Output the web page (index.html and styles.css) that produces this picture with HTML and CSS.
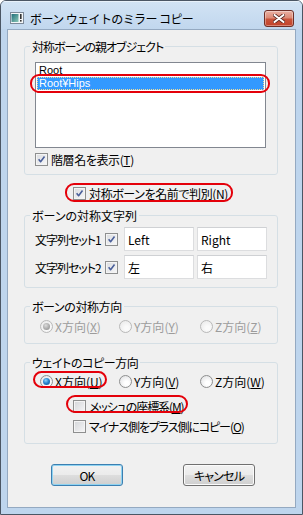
FILE: index.html
```html
<!DOCTYPE html>
<html lang="ja">
<head>
  <meta charset="UTF-8" />
  <meta name="viewport" content="width=device-width, initial-scale=1.0"/>
  <title>ボーン ウェイトのミラー コピー</title>
  <link rel="stylesheet" href="styles.css">
</head>
<body>
  <svg class="defs" width="0" height="0">
    <symbol id="chk" viewBox="0 0 11 11">
      <path d="M2 5.2 L4.4 8.2 L9.2 1.8" fill="none" stroke="#4a5f9a" stroke-width="1.9" stroke-linejoin="round"/>
    </symbol>
  </svg>

  <div class="window">
    <div class="titlebar">
      <svg class="app-icon" viewBox="0 0 14 12">
        <defs>
          <linearGradient id="pane" x1="0" y1="0" x2="1" y2="1">
            <stop offset="0" stop-color="#1f6d7a"/>
            <stop offset="1" stop-color="#8cc9b8"/>
          </linearGradient>
        </defs>
        <rect x="0.5" y="0.5" width="13" height="11" fill="#f3f6f8" stroke="#7c8999"/>
        <rect x="1.5" y="2" width="7" height="8" fill="url(#pane)"/>
        <rect x="10" y="2" width="1.6" height="5" fill="#333"/>
        <rect x="10" y="8" width="1.6" height="1.6" fill="#333"/>
      </svg>
      <span class="title">ボーン ウェイトのミラー コピー</span>
      <button class="close" title="閉じる">
        <svg viewBox="0 0 12 9" width="12" height="9">
          <path d="M1.5 1 L10.5 8 M10.5 1 L1.5 8" stroke="#5b2a24" stroke-width="3.6" stroke-linecap="round"/>
          <path d="M1.5 1 L10.5 8 M10.5 1 L1.5 8" stroke="#ffffff" stroke-width="2" stroke-linecap="round"/>
        </svg>
      </button>
    </div>

    <div class="frame">
      <div class="content">

        <fieldset class="group g-parent">
          <legend>対称ボーンの親オブジェクト</legend>
          <div class="group-body">
            <div class="listbox">
              <div class="item">Root</div>
              <div class="item selected">Root¥Hips<span class="mark"></span></div>
            </div>
            <label class="check"><span class="cb"><svg><use href="#chk"/></svg></span>階層名を表示<span class="key">(<u>T</u>)</span></label>
          </div>
        </fieldset>

        <div class="center-row">
          <label class="check marked"><span class="cb"><svg><use href="#chk"/></svg></span>対称ボーンを名前で判別<span class="key">(<u>N</u>)</span><span class="mark mark-name"></span></label>
        </div>

        <fieldset class="group g-strings">
          <legend>ボーンの対称文字列</legend>
          <div class="group-body">
            <div class="set-row">
              <span class="set-label">文字列セット1</span>
              <span class="cb"><svg><use href="#chk"/></svg></span>
              <input class="textbox" type="text" value="Left">
              <input class="textbox" type="text" value="Right">
            </div>
            <div class="set-row">
              <span class="set-label">文字列セット2</span>
              <span class="cb"><svg><use href="#chk"/></svg></span>
              <input class="textbox" type="text" value="左">
              <input class="textbox" type="text" value="右">
            </div>
          </div>
        </fieldset>

        <fieldset class="group g-axis">
          <legend>ボーンの対称方向</legend>
          <div class="group-body">
            <div class="radios disabled">
              <label class="radio"><span class="rb on"></span>X方向<span class="key">(<u>X</u>)</span></label>
              <label class="radio"><span class="rb"></span>Y方向<span class="key">(<u>Y</u>)</span></label>
              <label class="radio"><span class="rb"></span>Z方向<span class="key">(<u>Z</u>)</span></label>
            </div>
          </div>
        </fieldset>

        <fieldset class="group g-copy">
          <legend>ウェイトのコピー方向</legend>
          <div class="group-body">
            <div class="radios">
              <label class="radio marked"><span class="rb on"></span>X方向<span class="key">(<u>U</u>)</span><span class="mark mark-x"></span></label>
              <label class="radio"><span class="rb"></span>Y方向<span class="key">(<u>V</u>)</span></label>
              <label class="radio"><span class="rb"></span>Z方向<span class="key">(<u>W</u>)</span></label>
            </div>
            <label class="check sub marked"><span class="cb off"></span>メッシュの座標系<span class="key">(<u>M</u>)</span><span class="mark mark-mesh"></span></label>
            <label class="check sub"><span class="cb off"></span>マイナス側をプラス側にコピー<span class="key">(<u>O</u>)</span></label>
          </div>
        </fieldset>

        <div class="buttons">
          <button class="btn default">OK</button>
          <button class="btn">キャンセル</button>
        </div>

      </div>
    </div>
  </div>
</body>
</html>
```

FILE: styles.css
```css
* {
  box-sizing: border-box;
}

body {
  margin: 0;
  background-color: #ffffff;
  font-family: "Noto Sans CJK JP", "Noto Sans", sans-serif;
  font-size: 12px;
  color: #000;
  font-feature-settings: "palt";
}

.defs {
  position: absolute;
  width: 0;
  height: 0;
}

/* window frame */
.window {
  width: 303px;
  height: 515px;
  display: flex;
  flex-direction: column;
  border: 1px solid #4b5664;
  border-radius: 6px 6px 0 0;
  background-color: #bed5ed;
  overflow: hidden;
}

.titlebar {
  flex: none;
  height: 28px;
  display: flex;
  align-items: flex-start;
  padding: 0 8px 0 9px;
  background: linear-gradient(#d2e3f4, #c1d7ee);
  box-shadow: inset 0 1px 0 #e8f1fa;
}

.app-icon {
  width: 14px;
  height: 12px;
  margin-top: 11px;
}

.title {
  flex: 1;
  margin: 10px 0 0 6px;
  line-height: 15px;
  letter-spacing: -0.6px;
  white-space: nowrap;
  font-feature-settings: normal;
}

.close {
  width: 30px;
  height: 17px;
  margin-top: 9px;
  padding: 0;
  display: flex;
  align-items: center;
  justify-content: center;
  border: 1px solid #6e2f27;
  border-radius: 3px;
  background: linear-gradient(#eab1a4 0%, #dc8a76 45%, #c9543b 55%, #c2432b 100%);
  box-shadow: inset 0 0 0 1px rgba(255,255,255,0.35);
}

.frame {
  flex: 1;
  display: flex;
  padding: 0 6px 6px;
}

.content {
  flex: 1;
  display: flex;
  flex-direction: column;
  border: 1px solid #94a9c1;
  background-color: #f0f0f0;
  letter-spacing: -0.4px;
}

/* group boxes */
.group {
  margin: 11px 17px 0 16px;
  padding: 0;
  min-width: 0;
  border: 1px solid #d5dfe5;
  border-radius: 3px;
}

.group legend {
  margin-left: 5px;
  padding: 0 2px;
  line-height: 15px;
}

.g-parent {
  margin-top: 9px;
}

.g-parent legend {
  letter-spacing: -1px;
}

.g-parent .group-body {
  padding: 8px 11px 7px 10px;
}

.g-strings {
  margin-top: 7px;
}

.g-strings legend {
  letter-spacing: 0;
}

.g-strings .group-body {
  display: flex;
  flex-direction: column;
  gap: 4px;
  padding: 4px 0 8px 10px;
}

.g-axis .group-body {
  padding: 5px 0 9px 15px;
}

.g-copy .group-body {
  padding: 4px 0 9px 15px;
}

/* list box */
.listbox {
  height: 86px;
  padding: 1px 1px 0;
  border: 1px solid #828790;
  background-color: #fff;
  font-family: "Liberation Sans", sans-serif;
  font-size: 11px;
  letter-spacing: 0;
}

.item {
  position: relative;
  height: 13px;
  line-height: 13px;
  padding-left: 2px;
  white-space: nowrap;
}

.item.selected {
  background-color: #3399ff;
  color: #fff;
  outline: 1px dotted #f3dc95;
  outline-offset: -1px;
}

/* check boxes */
.check {
  display: flex;
  align-items: center;
  width: fit-content;
  height: 15px;
  line-height: 15px;
  white-space: nowrap;
}

.g-parent .check {
  margin-top: 4px;
}

.cb {
  flex: none;
  width: 13px;
  height: 13px;
  margin-right: 3px;
  padding: 1px;
  border: 1px solid #8e8f8f;
  background: linear-gradient(135deg, #dadcdf, #f8f8f9);
  box-shadow: inset 0 0 0 1px #f4f4f4;
}

.cb svg {
  display: block;
  width: 9px;
  height: 9px;
}

.cb.off {
  background: linear-gradient(135deg, #d4d6d9, #f6f6f7);
}

.key u {
  text-decoration-thickness: 1px;
  text-underline-offset: 1px;
}

.center-row {
  display: flex;
  justify-content: center;
  margin-top: 11px;
  padding-right: 2px;
}

.check.sub {
  margin-left: 33px;
  margin-top: 10px;
  letter-spacing: -1.1px;
}

.check.sub + .check.sub {
  margin-top: 5px;
}

/* string sets */
.set-row {
  display: flex;
  align-items: center;
  height: 24px;
}

.set-label {
  width: 70px;
  letter-spacing: -1px;
  white-space: nowrap;
}

.set-row .cb {
  margin-right: 6px;
}

.textbox {
  width: 70px;
  height: 24px;
  margin: 0;
  padding: 0 3px;
  border: 1px solid #dcdddf;
  border-top-color: #cfd1d4;
  background-color: #fff;
  font: inherit;
  font-feature-settings: "palt";
  letter-spacing: 0;
  color: #000;
  outline: none;
}

.textbox + .textbox {
  margin-left: 3px;
}

/* radio buttons */
.radios {
  display: grid;
  grid-template-columns: 79px 81px auto;
  height: 15px;
  letter-spacing: 0;
}

.radio {
  justify-self: start;
  display: flex;
  align-items: center;
  height: 15px;
  line-height: 15px;
  white-space: nowrap;
}

.rb {
  flex: none;
  width: 13px;
  height: 13px;
  margin-right: 2px;
  display: flex;
  align-items: center;
  justify-content: center;
  border: 1px solid #8e8f8f;
  border-radius: 50%;
  background: radial-gradient(circle at 60% 65%, #ffffff 20%, #dcdddf 100%);
}

.rb.on::after {
  content: "";
  width: 7px;
  height: 7px;
  border-radius: 50%;
  background: radial-gradient(circle at 40% 35%, #8fd5fb 0%, #2a86cf 45%, #0c4d8f 100%);
}

.radios.disabled .radio {
  color: #9c9c9c;
}

.radios.disabled .rb {
  border-color: #b9b9b9;
  background: radial-gradient(circle at 60% 65%, #fafafa 20%, #e6e6e6 100%);
}

.radios.disabled .rb.on::after {
  background: radial-gradient(circle at 40% 35%, #dcdcdc 0%, #a6a6a6 60%, #8d8d8d 100%);
}

/* red annotation marks */
.marked {
  position: relative;
}

.mark {
  position: absolute;
  border: 2px solid #e4000a;
  border-radius: 9px;
  pointer-events: none;
}

.item .mark {
  inset: -3px -6px -3px -7px;
}

.mark-name {
  inset: -3px -5px -1px -8px;
}

.mark-x {
  inset: -3px -4px 1px -7px;
}

.mark-mesh {
  inset: -4px -4px 1px -7px;
}

/* buttons */
.buttons {
  display: flex;
  gap: 60px;
  margin-top: 20px;
  padding-left: 43px;
}

.btn {
  width: 72px;
  height: 22px;
  padding: 0;
  border: 1px solid #707070;
  border-radius: 3px;
  background: linear-gradient(#f2f2f2 0%, #ebebeb 48%, #dddddd 52%, #cfcfcf 100%);
  box-shadow: inset 0 0 0 1px #fbfbfb;
  font: inherit;
  font-feature-settings: "palt";
  letter-spacing: -0.8px;
  color: #000;
}

.btn.default {
  border-color: #3c7fb1;
  box-shadow: inset 0 0 0 1px #8fd3f1;
}
```
